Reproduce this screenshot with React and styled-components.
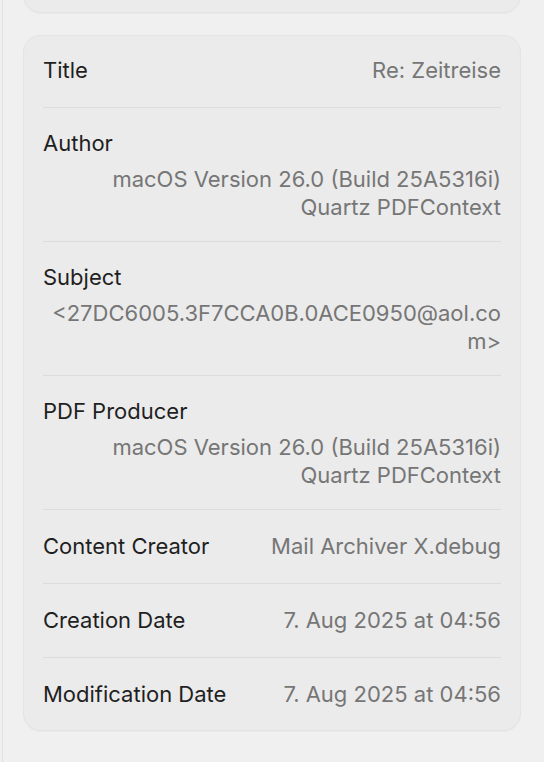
import React from 'react'
import styled, { createGlobalStyle } from 'styled-components'

const GlobalStyle = createGlobalStyle`
  html, body {
    margin: 0;
    padding: 0;
    background: #f0f0f0;
  }
  body {
    font-family: Inter, "Noto Sans", "Liberation Sans", sans-serif;
    -webkit-font-smoothing: antialiased;
  }
`

const Pane = styled.div`
  min-height: 762px;
  margin-left: 2px;
  border-left: 1px solid #e1e1e1;
  padding: 0 23px 0 20px;
  overflow: hidden;
  box-sizing: border-box;
`

const Card = styled.section`
  background: #ebebeb;
  border: 1px solid #e4e4e4;
  border-radius: 18px;
  padding: 0 19px;
  box-shadow: 0 0.5px 1px rgba(0, 0, 0, 0.03);
`

const StubCard = styled(Card)`
  height: 40px;
  margin-top: -29px;
  margin-bottom: 22px;
`

const Row = styled.div`
  display: flex;
  flex-direction: ${p => (p.$stacked ? 'column' : 'row')};
  justify-content: space-between;
  align-items: ${p => (p.$stacked ? 'stretch' : 'center')};
  padding: ${p => (p.$stacked ? '22px 0 20px' : '22px 0 23px')};
  border-top: 1px solid #dcdcdc;

  &:first-child {
    padding-top: 20px;
    border-top: none;
  }
  &:last-child {
    padding-bottom: 22px;
  }
`

const Label = styled.div`
  font-size: 22px;
  line-height: 26px;
  color: #1f1f1f;
`

const Value = styled.div`
  font-size: 22px;
  line-height: 28px;
  color: #767676;
  text-align: right;
  margin-top: ${p => (p.$stacked ? '9px' : '0')};
`

const fields = [
  { label: 'Title', value: ['Re: Zeitreise'] },
  { label: 'Author', value: ['macOS Version 26.0 (Build 25A5316i)', 'Quartz PDFContext'], stacked: true },
  { label: 'Subject', value: ['<27DC6005.3F7CCA0B.0ACE0950@aol.co', 'm>'], stacked: true },
  { label: 'PDF Producer', value: ['macOS Version 26.0 (Build 25A5316i)', 'Quartz PDFContext'], stacked: true },
  { label: 'Content Creator', value: ['Mail Archiver X.debug'] },
  { label: 'Creation Date', value: ['7. Aug 2025 at 04:56'] },
  { label: 'Modification Date', value: ['7. Aug 2025 at 04:56'] },
]

const App = () => {
  return (
    <>
      <GlobalStyle />
      <Pane>
        <StubCard />
        <Card>
          {fields.map(f => (
            <Row key={f.label} $stacked={f.stacked}>
              <Label>{f.label}</Label>
              <Value $stacked={f.stacked}>
                {f.value.map((line, j) => (
                  <React.Fragment key={j}>
                    {j > 0 && <br />}
                    {line}
                  </React.Fragment>
                ))}
              </Value>
            </Row>
          ))}
        </Card>
      </Pane>
    </>
  )
}

export default App
